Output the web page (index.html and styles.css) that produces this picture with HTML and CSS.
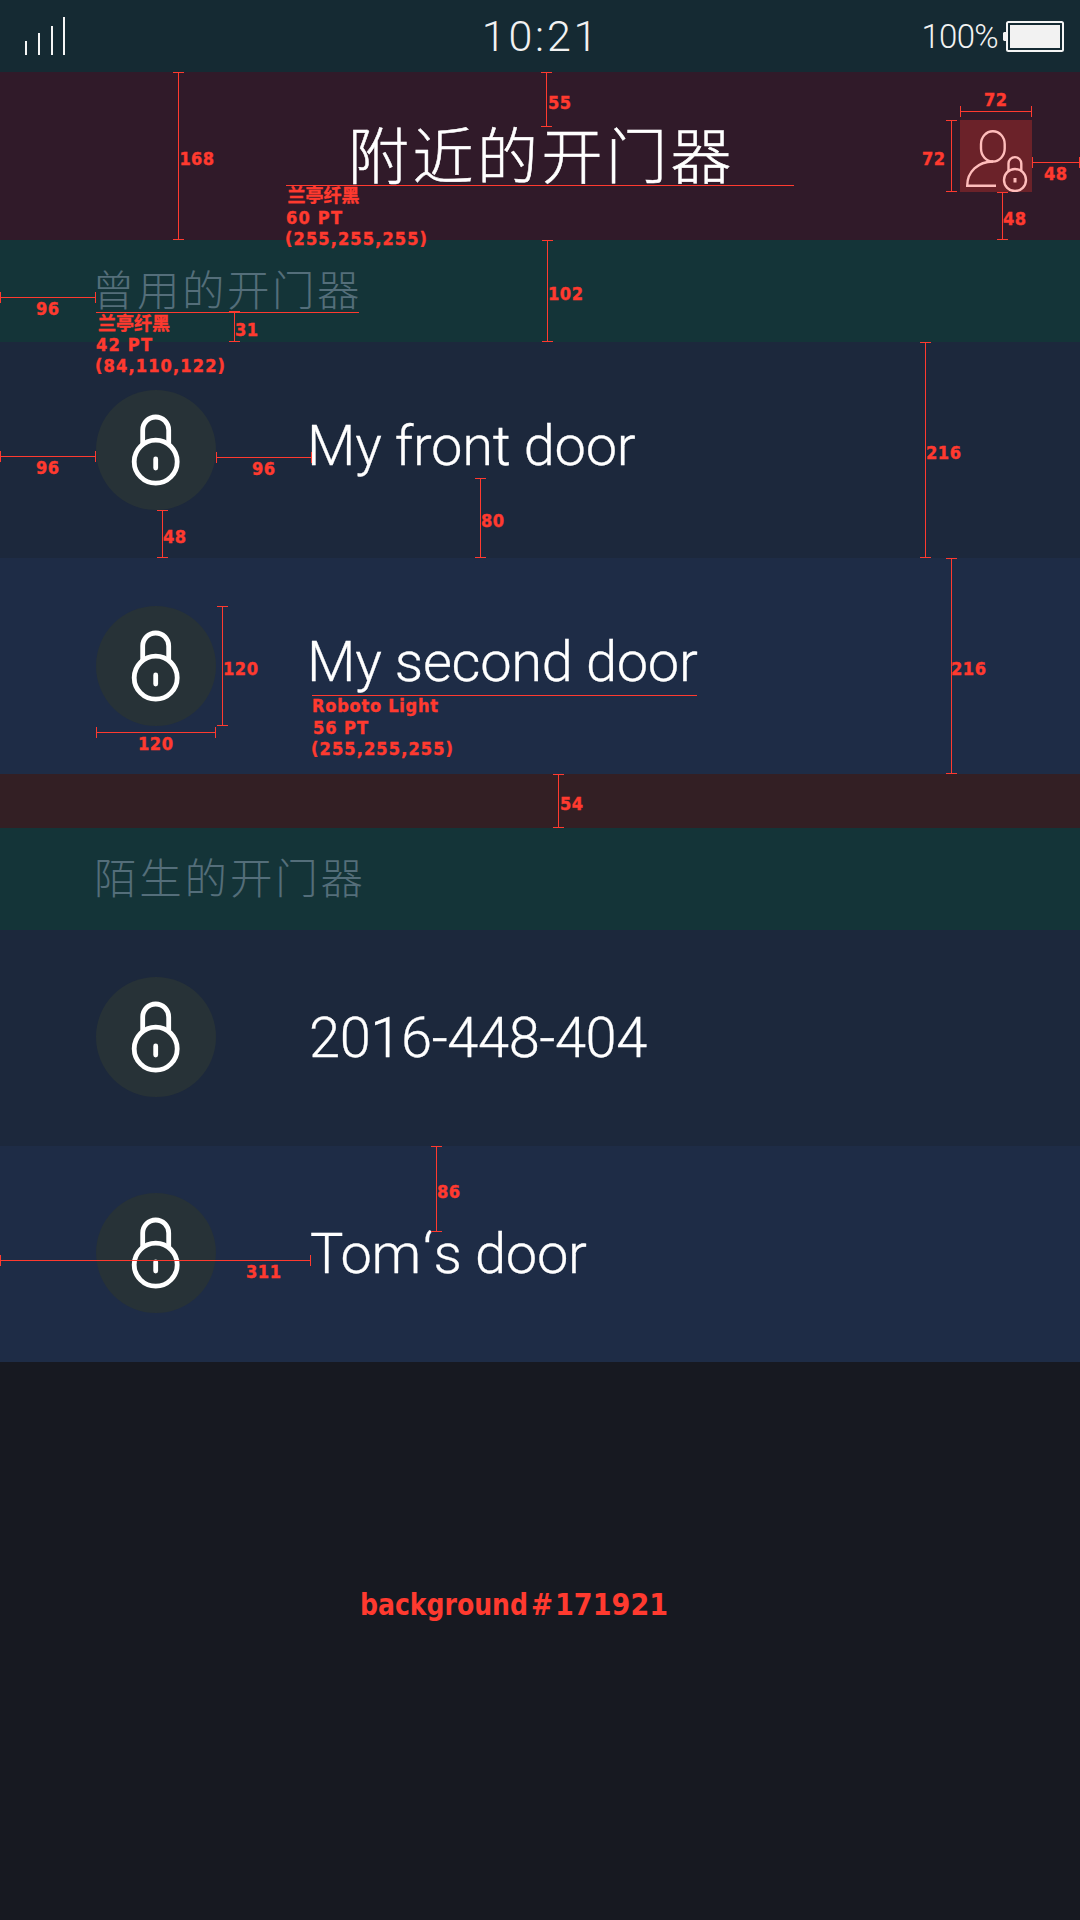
FILE: index.html
```html
<!DOCTYPE html>
<html lang="zh-CN">
<head>
<meta charset="utf-8">
<title>附近的开门器</title>
<link rel="stylesheet" href="styles.css">
</head>
<body>
<svg class="defs" width="0" height="0" aria-hidden="true">
  <symbol id="lock" viewBox="0 0 120 120">
    <g fill="none" stroke="#fff" stroke-width="4.8">
      <circle cx="59.700" cy="71.700" r="21.500"/>
      <path d="M46.700 54V40a13 13 0 0 1 26 0V54"/>
      <path d="M59.700 69v9" stroke-linecap="round"/>
    </g>
  </symbol>
</svg>
<div class="screen">
  <div class="status">
    <svg class="signal" width="42" height="40" viewBox="0 0 42 40" fill="#f5f5f5">
      <rect x="0" y="24" width="2" height="14"/><rect x="13" y="16" width="2" height="22"/><rect x="26" y="9" width="2" height="29"/><rect x="38" y="0" width="2" height="38"/>
    </svg>
    <div class="time">10:21</div>
    <div class="power">
      <span class="percent">100%</span>
      <svg width="61" height="31" viewBox="0 0 61 31" fill="#f2f2f2">
        <path d="M1 11h3v9H1l-1-1v-7z"/><rect x="4" y="1" width="56" height="29" rx="1.5" fill="none" stroke="#f5f5f5" stroke-width="2"/><rect x="7" y="4" width="50" height="23"/>
      </svg>
    </div>
  </div>
  <header class="header">
    <h1 class="title">附近的开门器</h1>
    <div class="account">
      <svg width="72" height="72" viewBox="0 0 72 72" fill="none" stroke="#ffbdbb" stroke-width="2.4">
        <rect x="21" y="11.200" width="23.700" height="30.300" rx="11.800" ry="13"/>
        <path d="M33 41.500C18 41.500 7.200 52 7.200 65.700H36"/>
        <circle cx="55" cy="60" r="11"/>
        <path d="M48.500 51V43.500a6.400 6.400 0 0 1 12.800 0V51"/>
        <path d="M55 58v4.500" stroke-width="3"/>
      </svg>
    </div>
  </header>
  <h2 class="group">曾用的开门器</h2>
  <ul class="doors">
    <li class="door"><span class="badge"><svg width="120" height="120"><use href="#lock"/></svg></span><span class="name">My front door</span></li>
    <li class="door door-alt"><span class="badge"><svg width="120" height="120"><use href="#lock"/></svg></span><span class="name">My second door</span></li>
  </ul>
  <div class="gap"></div>
  <h2 class="group group-strange">陌生的开门器</h2>
  <ul class="doors doors-strange">
    <li class="door"><span class="badge"><svg width="120" height="120"><use href="#lock"/></svg></span><span class="name name-code">2016-448-404</span></li>
    <li class="door door-alt"><span class="badge"><svg width="120" height="120"><use href="#lock"/></svg></span><span class="name">Tom<span class="quote">‘</span>s door</span></li>
  </ul>

  <svg class="spec" width="1080" height="1920" viewBox="0 0 1080 1920">
    <!-- vertical dimensions -->
    <path class="rule" d="M178.500 72V240M173 72.500h11M173 239.500h11
      M546.500 72V127M541 72.500h11M541 126.500h11
      M1002.500 192V240M997 192.500h11M997 239.500h11
      M951.500 120V192M946 120.500h11M946 191.500h11
      M547.500 240V342M542 240.500h11M542 341.500h11
      M234.500 311V342M229 311.500h11M229 341.500h11
      M162.500 510V558M157 510.500h11M157 557.500h11
      M480.500 478V558M475 478.500h11M475 557.500h11
      M925.500 342V558M920 342.500h11M920 557.500h11
      M951.500 558V774M946 558.500h11M946 773.500h11
      M222.500 606V726M217 606.500h11M217 725.500h11
      M558.500 774V828M553 774.500h11M553 827.500h11
      M436.500 1146V1232M431 1146.500h11M431 1231.500h11"/>
    <!-- horizontal dimensions -->
    <path class="rule" d="M960 111.500H1032M960.500 106v11M1031.500 106v11
      M1032 162.500H1080M1032.500 157v11M1079.500 157v11
      M0 297.500H96M.5 292v11M95.500 292v11
      M0 456.500H96M.5 451v11M95.500 451v11
      M216 457.500H312M216.500 452v11M311.500 452v11
      M96 732.500H216M96.500 727v11M215.500 727v11
      M0 1260.500H311M.5 1255v11M310.500 1255v11"/>
    <!-- text underlines -->
    <path class="rule" d="M286 185.500H794M96 312.500H359M312 695.500H697"/>
    <g class="label">
      <text x="179.500" y="165" textLength="34.500">168</text>
      <text x="548" y="109" textLength="23">55</text>
      <text x="984" y="106" textLength="23">72</text>
      <text x="922" y="165" textLength="23">72</text>
      <text x="1044" y="180" textLength="23">48</text>
      <text x="1003" y="225" textLength="23">48</text>
      <text class="cjk" x="287.500" y="202">兰亭纤黑</text>
      <text x="286" y="224" textLength="56">60 PT</text>
      <text x="285" y="245" textLength="142">(255,255,255)</text>
      <text x="548" y="300" textLength="35">102</text>
      <text x="235" y="336" textLength="23">31</text>
      <text x="36" y="315" textLength="23">96</text>
      <text class="cjk" x="98" y="330">兰亭纤黑</text>
      <text x="96" y="351" textLength="56">42 PT</text>
      <text x="95" y="372" textLength="130">(84,110,122)</text>
      <text x="36" y="474" textLength="23">96</text>
      <text x="252" y="475" textLength="23">96</text>
      <text x="163" y="543" textLength="23">48</text>
      <text x="481" y="527" textLength="23">80</text>
      <text x="926" y="459" textLength="35">216</text>
      <text x="223" y="675" textLength="35">120</text>
      <text x="138" y="750" textLength="35">120</text>
      <text x="312" y="712" textLength="126">Roboto Light</text>
      <text x="313" y="734" textLength="55">56 PT</text>
      <text x="311" y="755" textLength="142">(255,255,255)</text>
      <text x="951" y="675" textLength="35">216</text>
      <text x="560" y="810" textLength="23">54</text>
      <text x="437" y="1198" textLength="23">86</text>
      <text x="246" y="1278" textLength="35">311</text>
      <text class="big" x="360" y="1615" textLength="168" lengthAdjust="spacingAndGlyphs">background</text>
      <text class="big" x="531" y="1615" textLength="22" lengthAdjust="spacingAndGlyphs">#</text>
      <text class="big" x="555" y="1615" textLength="113">171921</text>
    </g>
  </svg>
</div>
</body>
</html>
```
FILE: styles.css
```css
* { box-sizing: border-box; }
body { margin: 0; background: #171921; }
.defs { display: block; }
.screen {
  position: relative;
  width: 1080px;
  height: 1920px;
  overflow: hidden;
  background: #171921;
  color: #fff;
  font-family: Roboto, "Noto Sans CJK SC", sans-serif;
  font-weight: 300;
}
.status {
  display: grid;
  grid-template-columns: 1fr auto 1fr;
  height: 72px;
  padding: 0 16px 0 25px;
  background: #152a33;
  color: #f2f2f2;
}
.signal { display: block; margin-top: 17px; }
.time {
  margin-right: 7px;
  padding-top: 1px;
  font-size: 43px;
  line-height: 70px;
  letter-spacing: 2.8px;
}
.power { display: flex; justify-content: flex-end; gap: 5px; padding-top: 21px; }
.percent { font-size: 33px; line-height: 31px; letter-spacing: -0.7px; }
.header {
  display: grid;
  grid-template-columns: 1fr auto 1fr;
  align-items: start;
  height: 168px;
  padding: 48px 48px 0;
  background: #301a29;
}
.title {
  grid-column: 2;
  margin: -3px 0 0 3px;
  font: 300 61px/72px "Noto Sans CJK SC", sans-serif;
  letter-spacing: 3.5px;
  -webkit-text-stroke: 0.5px #fff;
}
.account { justify-self: end; width: 72px; height: 72px; background: #6b2229; }
.account svg { display: block; }
.group {
  height: 102px;
  margin: 0;
  padding: 17px 0 0 92px;
  background: #143438;
  color: #546e7a;
  font: 300 42.5px/62px "Noto Sans CJK SC", sans-serif;
  letter-spacing: 2.5px;
}
.group-strange { padding-left: 94px; letter-spacing: 2.8px; }
.doors { margin: 0; padding: 0; list-style: none; }
.door {
  display: flex;
  gap: 91px;
  height: 216px;
  padding: 48px 0 0 96px;
  background: #1c283c;
}
.door-alt { background: #1e2c46; }
.doors-strange .door { gap: 94px; padding-top: 47px; }
.badge { width: 120px; height: 120px; border-radius: 50%; background: #273237; }
.badge svg { display: block; }
.name {
  font-size: 56px;
  line-height: 113px;
  letter-spacing: -0.3px;
  -webkit-text-stroke: 0.3px #fff;
}
.doors-strange .name { padding-top: 5px; }
.doors-strange .name-code { margin-left: -1px; letter-spacing: -0.4px; }
.quote { margin: 0 1px 0 2px; }
.gap { height: 54px; background: #331f24; }
.spec { position: absolute; inset: 0; }
.rule { fill: none; stroke: #ff3a2f; stroke-width: 1; }
.label {
  fill: #ff3a2f;
  stroke: #ff3a2f;
  stroke-width: 0.4;
  font: bold 18px "DejaVu Sans Condensed", "DejaVu Sans", sans-serif;
  font-stretch: condensed;
}
.label .cjk { font: bold 18px "Noto Sans CJK SC", sans-serif; }
.label .big { font-size: 30px; stroke: none; }
```
